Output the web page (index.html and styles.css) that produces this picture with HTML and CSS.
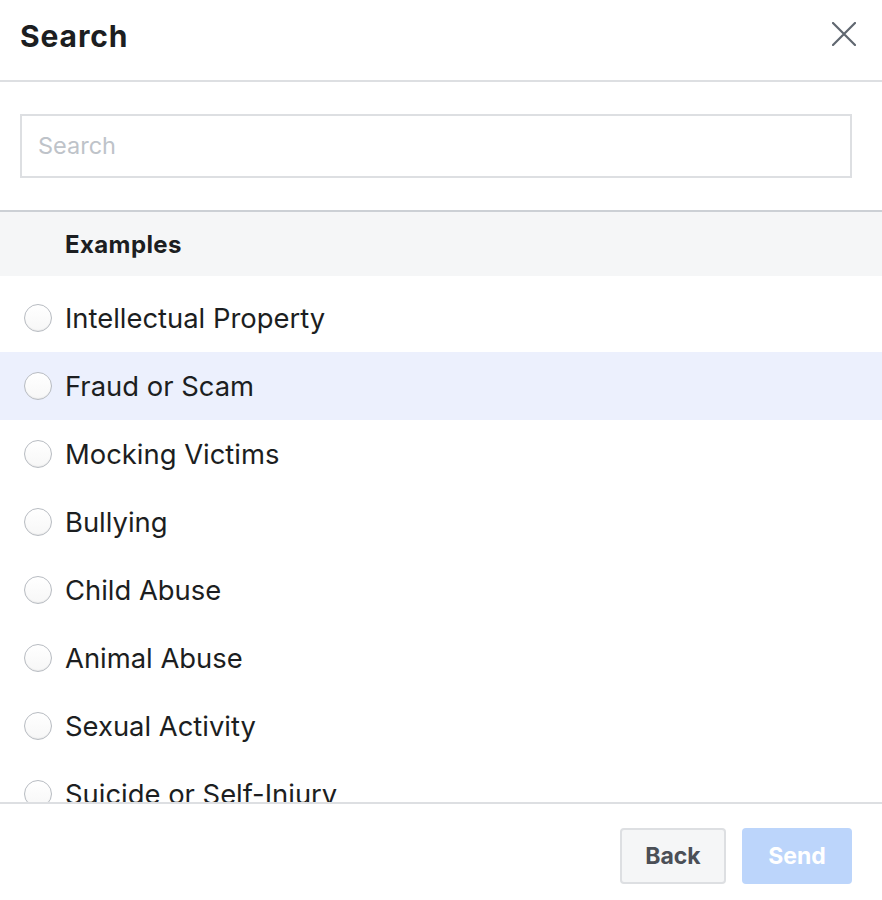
FILE: index.html
```html
<!DOCTYPE html>
<html lang="en">
<head>
<meta charset="utf-8">
<title>Search</title>
<link rel="stylesheet" href="styles.css">
</head>
<body>
<div class="dialog">
  <header class="header">
    <h1 class="title">Search</h1>
    <button class="close" aria-label="Close">
      <svg width="24" height="24" viewBox="0 0 24 24"><path d="M1 1 L23 23 M23 1 L1 23" stroke="#606770" stroke-width="2.2" stroke-linecap="round" fill="none"/></svg>
    </button>
  </header>
  <div class="search-wrap">
    <input class="search" type="text" placeholder="Search">
  </div>
  <div class="list">
    <div class="section">Examples</div>
    <ul class="options">
      <li class="option"><span class="radio"></span><span class="label">Intellectual Property</span></li>
      <li class="option hover"><span class="radio"></span><span class="label">Fraud or Scam</span></li>
      <li class="option"><span class="radio"></span><span class="label">Mocking Victims</span></li>
      <li class="option"><span class="radio"></span><span class="label">Bullying</span></li>
      <li class="option"><span class="radio"></span><span class="label">Child Abuse</span></li>
      <li class="option"><span class="radio"></span><span class="label">Animal Abuse</span></li>
      <li class="option"><span class="radio"></span><span class="label">Sexual Activity</span></li>
      <li class="option"><span class="radio"></span><span class="label">Suicide or Self-Injury</span></li>
    </ul>
  </div>
  <footer class="footer">
    <button class="btn btn-back">Back</button>
    <button class="btn btn-send">Send</button>
  </footer>
</div>
</body>
</html>
```
FILE: styles.css
```css
* { box-sizing: border-box; }
html, body { margin: 0; padding: 0; background: #fff; }
body { font-family: Inter, "Liberation Sans", Arial, sans-serif; color: #1c1e21; }

.dialog {
  width: 882px;
  height: 900px;
  display: flex;
  flex-direction: column;
  overflow: hidden;
}

.header {
  height: 82px;
  flex: none;
  display: flex;
  align-items: center;
  justify-content: space-between;
  padding: 0 26px 8px 20px;
  border-bottom: 2px solid #dddfe2;
}
.title {
  margin: 0;
  font-size: 30px;
  font-weight: 700;
  color: #1c1e21;
  letter-spacing: 0.9px;
}
.close {
  border: 0;
  background: none;
  padding: 0;
  width: 24px;
  height: 24px;
  margin-bottom: 4px;
  cursor: pointer;
}
.close svg { display: block; }

.search-wrap {
  flex: none;
  padding: 32px 30px 32px 20px;
  border-bottom: 2px solid #ccd0d5;
}
.search {
  display: block;
  width: 100%;
  height: 64px;
  border: 2px solid #dddfe2;
  padding: 0 16px 2px;
  font-family: inherit;
  font-size: 23.5px;
  color: #1c1e21;
  outline: none;
}
.search::placeholder { color: #bec3c9; }

.list {
  flex: 1;
  overflow: hidden;
}
.section {
  height: 64px;
  background: #f5f6f7;
  display: flex;
  align-items: center;
  padding-left: 65px;
  font-size: 24px;
  font-weight: 700;
  letter-spacing: 0.4px;
  color: #1c1e21;
}
.options {
  list-style: none;
  margin: 0;
  padding: 8px 0 0;
}
.option {
  height: 68px;
  display: flex;
  align-items: center;
  padding-left: 24px;
  gap: 13px;
}
.option.hover { background: #ecf0fd; }
.radio {
  width: 28px;
  height: 28px;
  border-radius: 50%;
  border: 1.5px solid #b8bcc2;
  background: linear-gradient(#ffffff, #f7f7f7);
  box-shadow: inset 0 -1px 1px rgba(0,0,0,0.06);
  flex: none;
}
.label {
  font-size: 27.4px;
  color: #1c1e21;
}

.footer {
  flex: none;
  height: 98px;
  border-top: 2px solid #dddfe2;
  display: flex;
  justify-content: flex-end;
  align-items: flex-start;
  gap: 16px;
  padding: 24px 30px 0 0;
}
.btn {
  height: 56px;
  border-radius: 4px;
  font-family: inherit;
  font-size: 23px;
  font-weight: 700;
  line-height: 1;
  padding: 0;
}
.btn-back {
  width: 106px;
  background: #f5f6f7;
  border: 2px solid #dddfe2;
  color: #4b4f56;
}
.btn-send {
  width: 110px;
  background: #bcd5fb;
  border: 0;
  color: #fff;
}
```
